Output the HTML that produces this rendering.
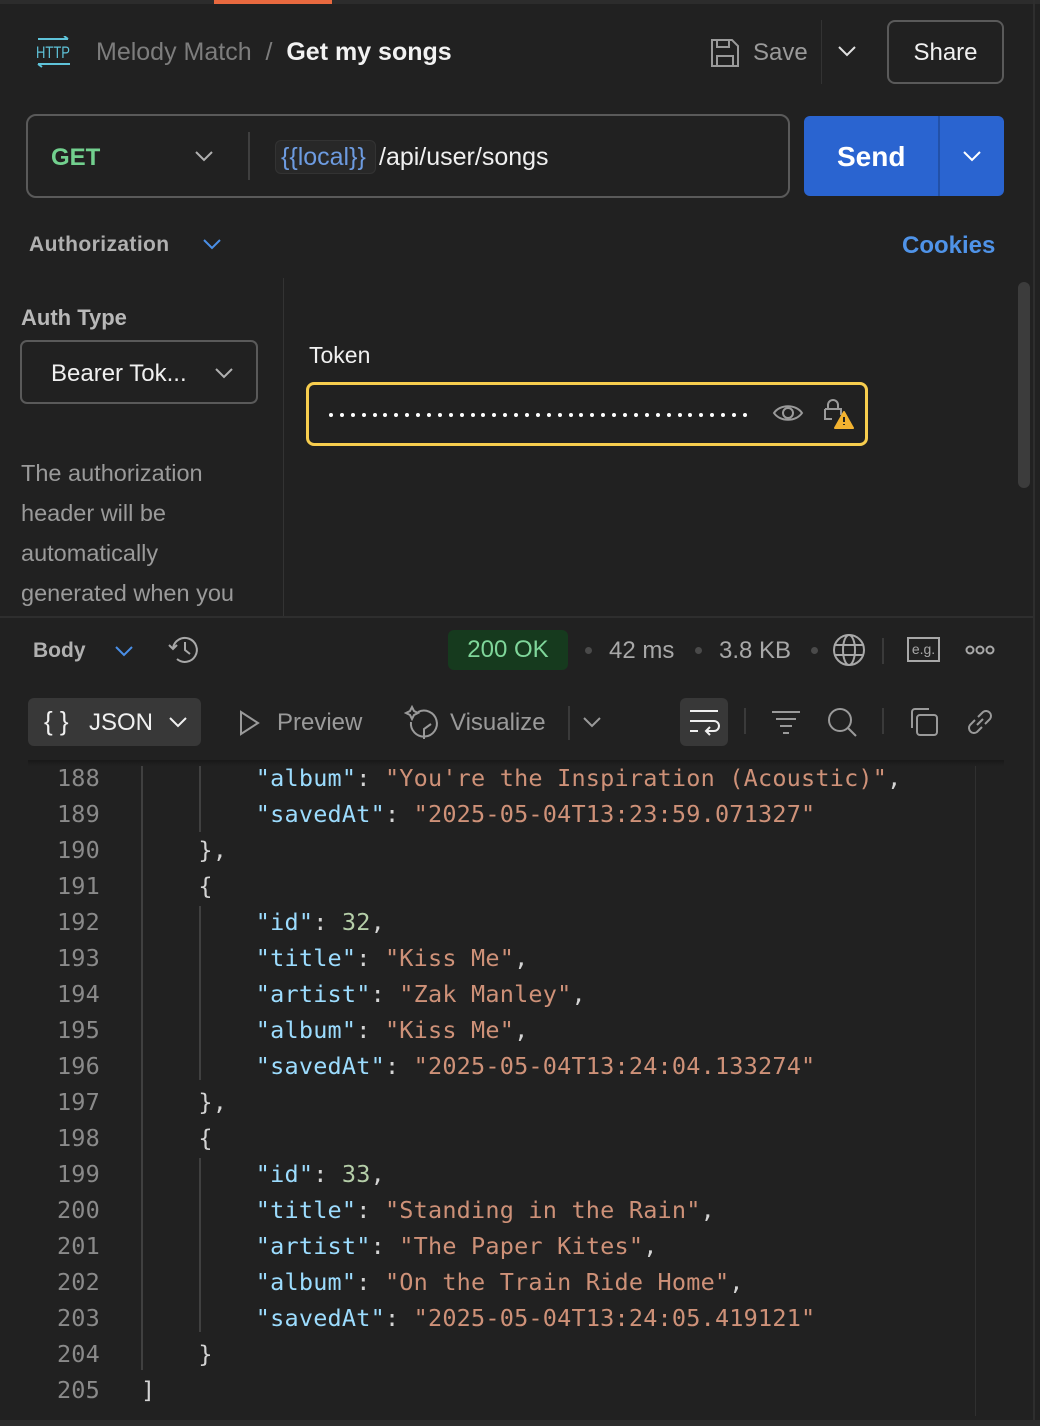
<!DOCTYPE html>
<html><head><meta charset="utf-8">
<style>
*{box-sizing:border-box;margin:0;padding:0}
html,body{width:1040px;height:1426px;background:#212121;overflow:hidden;font-family:"Liberation Sans",sans-serif;color:#e6e6e6}
.a{position:absolute}
.code{font-family:"DejaVu Sans Mono","Liberation Mono",monospace;font-size:23.5px;white-space:pre;letter-spacing:0.2px}
.k{color:#9cdcfe}.s{color:#ce9178}.n{color:#b5cea8}.p{color:#d4d4d4}
.ln{color:#8a8a8a;width:100px;text-align:right}
.dots{display:flex;gap:0}
.dots i{display:block;width:4px;height:4px;border-radius:50%;background:#fff;margin-right:6.9px}
</style></head><body>
<div class="a" style="left:0;top:0;width:1040px;height:4px;background:#2c2c2c"></div>
<div class="a" style="left:214px;top:0;width:118px;height:4px;background:#e8693f"></div>
<div class="a" style="left:1033px;top:0;width:2px;height:1426px;background:#2e2e2e"></div>

<svg class="a" style="left:36px;top:36px" width="36" height="32" viewBox="0 0 36 32" fill="none" stroke="#5fc3d9" stroke-width="2">
<path d="M2 3h30M28 0l4 3"/><path d="M2 28h32M6 31l-4-3"/>
<text x="0" y="22" font-family="Liberation Sans Narrow, Liberation Sans" font-size="17" textLength="34" lengthAdjust="spacingAndGlyphs" fill="#5fc3d9" stroke="none">HTTP</text></svg>
<div class="a" style="left:96px;top:38px;font-size:25px;color:#7d7d7d">Melody Match&nbsp;&nbsp;/&nbsp;&nbsp;<span style="color:#f2f2f2;font-weight:bold">Get my songs</span></div>
<svg class="a" style="left:710px;top:38px" width="30" height="30" viewBox="0 0 30 30" fill="none" stroke="#9a9a9a" stroke-width="2"><path d="M2 2h20l6 6v20H2z"/><path d="M7 2v7h12V2"/><path d="M7 28V18h16v10"/></svg>
<div class="a" style="left:753px;top:39px;font-size:24px;color:#9a9a9a">Save</div>
<div class="a" style="left:821px;top:20px;width:1px;height:64px;background:#333"></div>
<svg class="a" style="left:837px;top:44px" width="20" height="14" viewBox="0 0 20 14" fill="none" stroke="#e0e0e0" stroke-width="2"><path d="M2 3l8 8 8-8"/></svg>
<div class="a" style="left:887px;top:20px;width:117px;height:64px;border:2px solid #5a5a5a;border-radius:8px;font-size:24px;text-align:center;line-height:62px;color:#f0f0f0">Share</div>

<div class="a" style="left:26px;top:114px;width:764px;height:84px;border:2px solid #5a5a5a;border-radius:10px"></div>
<div class="a" style="left:51px;top:144px;font-size:24px;font-weight:bold;color:#72d08e">GET</div>
<svg class="a" style="left:194px;top:150px" width="20" height="12" viewBox="0 0 20 12" fill="none" stroke="#b0b0b0" stroke-width="2"><path d="M2 2l8 8 8-8"/></svg>
<div class="a" style="left:248px;top:132px;width:2px;height:48px;background:#3f3f3f"></div>
<div class="a" style="left:275px;top:140px;width:101px;height:34px;background:#282828;border:1px solid #333;border-radius:6px"></div>
<div class="a" style="left:281px;top:143px;font-size:25px;color:#6d9be0">{{local}}</div>
<div class="a" style="left:379px;top:143px;font-size:25px;color:#f0f0f0">/api/user/songs</div>
<div class="a" style="left:804px;top:116px;width:200px;height:80px;background:#2a64d0;border-radius:6px"></div>
<div class="a" style="left:938px;top:116px;width:2px;height:80px;background:#2251a8"></div>
<div class="a" style="left:837px;top:141px;font-size:28px;font-weight:bold;color:#fff">Send</div>
<svg class="a" style="left:962px;top:150px" width="20" height="12" viewBox="0 0 20 12" fill="none" stroke="#fff" stroke-width="2"><path d="M2 2l8 8 8-8"/></svg>

<div class="a" style="left:29px;top:233px;font-size:21px;font-weight:bold;color:#b0b0b0;letter-spacing:0.4px">Authorization</div>
<svg class="a" style="left:202px;top:238px" width="20" height="12" viewBox="0 0 20 12" fill="none" stroke="#4a8fe7" stroke-width="2"><path d="M2 2l8 8 8-8"/></svg>
<div class="a" style="left:902px;top:232px;font-size:24px;font-weight:bold;color:#4f93e8">Cookies</div>

<div class="a" style="left:283px;top:278px;width:1px;height:338px;background:#333"></div>
<div class="a" style="left:21px;top:305px;font-size:22px;font-weight:bold;color:#b8b8b8">Auth Type</div>
<div class="a" style="left:20px;top:340px;width:238px;height:64px;border:2px solid #5a5a5a;border-radius:7px"></div>
<div class="a" style="left:51px;top:360px;font-size:24px;color:#f0f0f0">Bearer Tok...</div>
<svg class="a" style="left:214px;top:367px" width="20" height="12" viewBox="0 0 20 12" fill="none" stroke="#b0b0b0" stroke-width="2"><path d="M2 2l8 8 8-8"/></svg>
<div class="a" style="left:21px;top:453px;font-size:23.5px;line-height:40px;color:#9a9a9a;width:260px">The authorization<br>header will be<br>automatically<br>generated when you</div>

<div class="a" style="left:309px;top:342px;font-size:23px;color:#f0f0f0">Token</div>
<div class="a" style="left:306px;top:382px;width:562px;height:64px;border:3px solid #f7cd4e;border-radius:8px"></div>
<div class="a dots" style="left:329px;top:413px">
<i></i><i></i><i></i><i></i><i></i><i></i><i></i><i></i><i></i><i></i><i></i><i></i><i></i><i></i><i></i><i></i><i></i><i></i><i></i><i></i><i></i><i></i><i></i><i></i><i></i><i></i><i></i><i></i><i></i><i></i><i></i><i></i><i></i><i></i><i></i><i></i><i></i><i></i><i></i>
</div>
<svg class="a" style="left:772px;top:402px" width="32" height="22" viewBox="0 0 32 22" fill="none" stroke="#9a9a9a" stroke-width="2"><path d="M2 11C8 2 24 2 30 11C24 20 8 20 2 11z"/><circle cx="16" cy="11" r="5"/></svg>
<svg class="a" style="left:822px;top:398px" width="32" height="32" viewBox="0 0 32 32" fill="none" stroke="#9a9a9a" stroke-width="2"><path d="M6 10V7a5 5 0 0 1 10 0v3"/><path d="M3 11h16v6M3 11v10h7"/><path d="M22 14l9 16H13z" fill="#f2b230" stroke="#f2b230" stroke-linejoin="round"/><path d="M22 19v5M22 26v1" stroke="#212121"/></svg>

<div class="a" style="left:1018px;top:282px;width:12px;height:206px;background:#3c3c3c;border-radius:6px"></div>
<div class="a" style="left:0;top:616px;width:1035px;height:2px;background:#2e2e2e"></div>

<div class="a" style="left:33px;top:639px;font-size:21px;font-weight:bold;color:#b0b0b0">Body</div>
<svg class="a" style="left:114px;top:645px" width="20" height="12" viewBox="0 0 20 12" fill="none" stroke="#4a8fe7" stroke-width="2"><path d="M2 2l8 8 8-8"/></svg>
<svg class="a" style="left:167px;top:634px" width="34" height="32" viewBox="0 0 34 32" fill="none" stroke="#a8a8a8" stroke-width="2"><path d="M6 14A12 12 0 1 1 10 25"/><path d="M2 11l4 4 4-4"/><path d="M18 8v8l5 4"/></svg>
<div class="a" style="left:448px;top:630px;width:120px;height:40px;background:#163a1e;border-radius:6px;text-align:center;line-height:40px;font-size:24px;color:#7fd69a">200 OK</div>
<div class="a" style="left:585px;top:647px;width:7px;height:7px;border-radius:50%;background:#4a4a4a"></div>
<div class="a" style="left:609px;top:637px;font-size:24px;color:#a8a8a8">42 ms</div>
<div class="a" style="left:695px;top:647px;width:7px;height:7px;border-radius:50%;background:#4a4a4a"></div>
<div class="a" style="left:719px;top:637px;font-size:24px;color:#a8a8a8">3.8 KB</div>
<div class="a" style="left:811px;top:647px;width:7px;height:7px;border-radius:50%;background:#4a4a4a"></div>
<svg class="a" style="left:832px;top:633px" width="34" height="34" viewBox="0 0 34 34" fill="none" stroke="#a8a8a8" stroke-width="2"><circle cx="17" cy="17" r="15"/><ellipse cx="17" cy="17" rx="6" ry="15"/><path d="M3 12h28M3 22h28"/></svg>
<div class="a" style="left:882px;top:638px;width:2px;height:26px;background:#3a3a3a"></div>
<div class="a" style="left:907px;top:637px;width:33px;height:25px;border:2px solid #a8a8a8;font-size:14px;color:#a8a8a8;text-align:center;line-height:20px">e.g.</div>
<svg class="a" style="left:965px;top:644px" width="30" height="12" viewBox="0 0 30 12" fill="none" stroke="#a8a8a8" stroke-width="2"><circle cx="5" cy="6" r="3.5"/><circle cx="15" cy="6" r="3.5"/><circle cx="25" cy="6" r="3.5"/></svg>

<div class="a" style="left:28px;top:698px;width:173px;height:48px;background:#383838;border-radius:6px"></div>
<div class="a" style="left:44px;top:706px;font-size:26px;color:#f0f0f0">{ }</div>
<div class="a" style="left:89px;top:709px;font-size:24px;color:#f0f0f0">JSON</div>
<svg class="a" style="left:168px;top:716px" width="20" height="12" viewBox="0 0 20 12" fill="none" stroke="#f0f0f0" stroke-width="2"><path d="M2 2l8 8 8-8"/></svg>
<svg class="a" style="left:238px;top:709px" width="24" height="28" viewBox="0 0 24 28" fill="none" stroke="#9a9a9a" stroke-width="2"><path d="M3 3l17 11L3 25z"/></svg>
<div class="a" style="left:277px;top:709px;font-size:24px;color:#9a9a9a">Preview</div>
<svg class="a" style="left:404px;top:705px" width="36" height="36" viewBox="0 0 36 36" fill="none" stroke="#9a9a9a" stroke-width="2"><path d="M14 7A13 13 0 1 1 7 17"/><path d="M20 34V24l7-5"/><path d="M8 2l2 4 4 2-4 2-2 4-2-4-4-2 4-2z"/></svg>
<div class="a" style="left:450px;top:709px;font-size:24px;color:#9a9a9a">Visualize</div>
<div class="a" style="left:568px;top:706px;width:2px;height:34px;background:#3a3a3a"></div>
<svg class="a" style="left:582px;top:716px" width="20" height="12" viewBox="0 0 20 12" fill="none" stroke="#9a9a9a" stroke-width="2"><path d="M2 2l8 8 8-8"/></svg>
<div class="a" style="left:680px;top:698px;width:48px;height:48px;background:#383838;border-radius:6px"></div>
<svg class="a" style="left:688px;top:708px" width="32" height="28" viewBox="0 0 32 28" fill="none" stroke="#f0f0f0" stroke-width="2"><path d="M2 3h28M2 13h24a5 5 0 0 1 0 10H18M2 23h8"/><path d="M22 19l-4 4 4 4"/></svg>
<div class="a" style="left:744px;top:708px;width:2px;height:26px;background:#3a3a3a"></div>
<svg class="a" style="left:771px;top:709px" width="30" height="26" viewBox="0 0 30 26" fill="none" stroke="#9a9a9a" stroke-width="2"><path d="M1 3h28M5 10h20M9 17h12M12 24h6"/></svg>
<svg class="a" style="left:826px;top:706px" width="32" height="32" viewBox="0 0 32 32" fill="none" stroke="#9a9a9a" stroke-width="2"><circle cx="14" cy="14" r="11"/><path d="M22 22l8 8"/></svg>
<div class="a" style="left:882px;top:708px;width:2px;height:26px;background:#3a3a3a"></div>
<svg class="a" style="left:908px;top:706px" width="32" height="32" viewBox="0 0 32 32" fill="none" stroke="#9a9a9a" stroke-width="2"><rect x="9" y="9" width="20" height="20" rx="3"/><path d="M4 22V6a3 3 0 0 1 3-3h14"/></svg>
<svg class="a" style="left:964px;top:706px" width="32" height="32" viewBox="0 0 32 32" fill="none" stroke="#9a9a9a" stroke-width="2"><path d="M13 19l6-6"/><path d="M11 14l-5 5a5 5 0 0 0 7 7l5-5"/><path d="M21 18l5-5a5 5 0 0 0-7-7l-5 5"/></svg>

<div class="a" style="left:28px;top:760px;width:976px;height:6px;background:linear-gradient(#181818,#212121)"></div>
<div class="a" style="left:141px;top:766px;width:2px;height:604px;background:#404040"></div>
<div class="a" style="left:199px;top:766px;width:2px;height:66px;background:#404040"></div>
<div class="a" style="left:199px;top:906px;width:2px;height:174px;background:#404040"></div>
<div class="a" style="left:199px;top:1158px;width:2px;height:174px;background:#404040"></div>
<div class="a" style="left:975px;top:766px;width:1px;height:650px;background:#303030"></div>
<div class="a" style="left:0;top:1420px;width:1040px;height:6px;background:#2c2c2c"></div>

<div class="a code ln" style="left:0;top:760px;line-height:36px">188
189
190
191
192
193
194
195
196
197
198
199
200
201
202
203
204
205</div>
<div class="a code" style="left:141px;top:760px;line-height:36px"><span class="p">        </span><span class="k">"album"</span><span class="p">: </span><span class="s">"You're the Inspiration (Acoustic)"</span><span class="p">,</span>
<span class="p">        </span><span class="k">"savedAt"</span><span class="p">: </span><span class="s">"2025-05-04T13:23:59.071327"</span>
<span class="p">    },</span>
<span class="p">    {</span>
<span class="p">        </span><span class="k">"id"</span><span class="p">: </span><span class="n">32</span><span class="p">,</span>
<span class="p">        </span><span class="k">"title"</span><span class="p">: </span><span class="s">"Kiss Me"</span><span class="p">,</span>
<span class="p">        </span><span class="k">"artist"</span><span class="p">: </span><span class="s">"Zak Manley"</span><span class="p">,</span>
<span class="p">        </span><span class="k">"album"</span><span class="p">: </span><span class="s">"Kiss Me"</span><span class="p">,</span>
<span class="p">        </span><span class="k">"savedAt"</span><span class="p">: </span><span class="s">"2025-05-04T13:24:04.133274"</span>
<span class="p">    },</span>
<span class="p">    {</span>
<span class="p">        </span><span class="k">"id"</span><span class="p">: </span><span class="n">33</span><span class="p">,</span>
<span class="p">        </span><span class="k">"title"</span><span class="p">: </span><span class="s">"Standing in the Rain"</span><span class="p">,</span>
<span class="p">        </span><span class="k">"artist"</span><span class="p">: </span><span class="s">"The Paper Kites"</span><span class="p">,</span>
<span class="p">        </span><span class="k">"album"</span><span class="p">: </span><span class="s">"On the Train Ride Home"</span><span class="p">,</span>
<span class="p">        </span><span class="k">"savedAt"</span><span class="p">: </span><span class="s">"2025-05-04T13:24:05.419121"</span>
<span class="p">    }</span>
<span class="p">]</span></div>
</body></html>
